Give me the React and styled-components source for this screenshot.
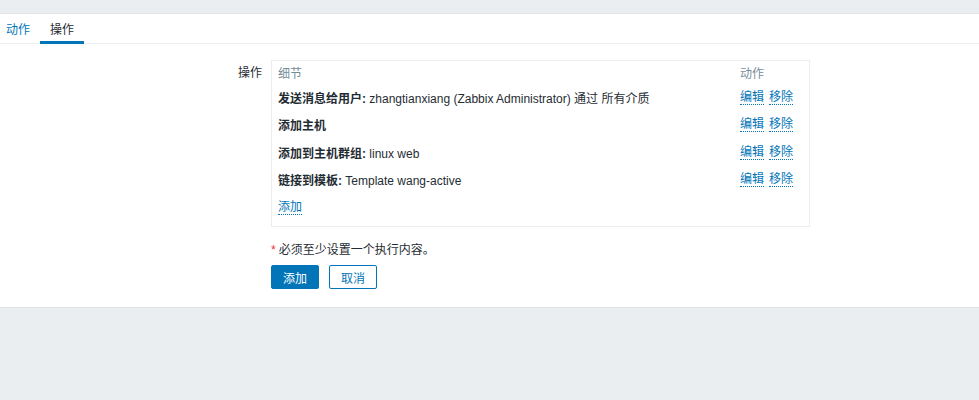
import React from "react";
import styled, { createGlobalStyle } from "styled-components";

const Global = createGlobalStyle`
  html, body { margin: 0; padding: 0; background: #ebeef1; }
  body {
    font-family: "Liberation Sans", Arial, "Noto Sans CJK SC", sans-serif;
    font-size: 12px;
    color: #1f2c33;
  }
`;

const Page = styled.div`
  width: 979px;
  height: 400px;
  background: #ebeef1;
  display: flex;
  flex-direction: column;
`;

const TopStrip = styled.div`
  height: 13px;
  border-bottom: 1px solid #dfe4e7;
`;

const Panel = styled.div`
  background: #ffffff;
  border-bottom: 1px solid #dfe4e7;
  height: 293px;
  display: flex;
  flex-direction: column;
`;

const TabBar = styled.div`
  display: flex;
  gap: 4px;
  height: 30px;
  border-bottom: 1px solid #ebeef1;
  box-sizing: border-box;
`;

const Tab = styled.div`
  display: flex;
  align-items: center;
  justify-content: center;
  height: 30px;
  box-sizing: border-box;
  padding-top: 2px;
  width: ${(p) => p.$w}px;
  color: ${(p) => (p.$active ? "#1f2c33" : "#0275b8")};
  border-bottom: 3px solid ${(p) => (p.$active ? "#0275b8" : "transparent")};
`;

const Form = styled.div`
  display: grid;
  grid-template-columns: 262px 539px;
  column-gap: 9px;
  padding-top: 16px;
`;

const Label = styled.div`
  text-align: right;
  line-height: 24px;
  padding-top: 1px;
`;

const Box = styled.div`
  border: 1px solid #ebeef1;
  padding: 0 6px 5px 6px;
  box-sizing: border-box;
  width: 539px;
`;

const Row = styled.div`
  display: grid;
  grid-template-columns: 1fr 63px;
  align-items: center;
  height: ${(p) => p.$h || 27.5}px;
`;

const Head = styled.span`
  color: #768d99;
`;

const Bold = styled.b`
  font-weight: bold;
`;

const Links = styled.div`
  display: flex;
  gap: 5px;
`;

const Link = styled.a`
  color: #0275b8;
  text-decoration: none;
  border-bottom: 1px dotted #0275b8;
  line-height: 14px;
  cursor: pointer;
`;

const Note = styled.div`
  grid-column: 2;
  margin-top: 13px;
  line-height: 20px;
`;

const Star = styled.span`
  color: #e33734;
  margin-right: 3px;
`;

const Buttons = styled.div`
  grid-column: 2;
  display: flex;
  gap: 10px;
  margin-top: 5px;
`;

const Button = styled.button`
  width: 48px;
  height: 24px;
  box-sizing: border-box;
  border-radius: 2px;
  font-family: inherit;
  font-size: 12px;
  padding: 0;
  border: 1px solid #0275b8;
  background: ${(p) => (p.$primary ? "#0275b8" : "#ffffff")};
  color: ${(p) => (p.$primary ? "#ffffff" : "#0275b8")};
`;

const ops = [
  { b: "发送消息给用户:", t: " zhangtianxiang (Zabbix Administrator) 通过 所有介质" },
  { b: "添加主机", t: "" },
  { b: "添加到主机群组:", t: " linux web" },
  { b: "链接到模板:", t: " Template wang-active" },
];

export default function App() {
  return (
    <Page>
      <Global />
      <TopStrip />
      <Panel>
        <TabBar>
          <Tab $w={36}>动作</Tab>
          <Tab $w={44} $active>操作</Tab>
        </TabBar>
        <Form>
          <Label>操作</Label>
          <Box>
            <Row $h={22.5}>
              <Head>细节</Head>
              <Head>动作</Head>
            </Row>
            {ops.map((o, i) => (
              <Row key={i}>
                <span>
                  <Bold>{o.b}</Bold>
                  {o.t}
                </span>
                <Links>
                  <Link>编辑</Link>
                  <Link>移除</Link>
                </Links>
              </Row>
            ))}
            <Row>
              <span>
                <Link>添加</Link>
              </span>
            </Row>
          </Box>
          <Note>
            <Star>*</Star>必须至少设置一个执行内容。
          </Note>
          <Buttons>
            <Button $primary>添加</Button>
            <Button>取消</Button>
          </Buttons>
        </Form>
      </Panel>
    </Page>
  );
}
